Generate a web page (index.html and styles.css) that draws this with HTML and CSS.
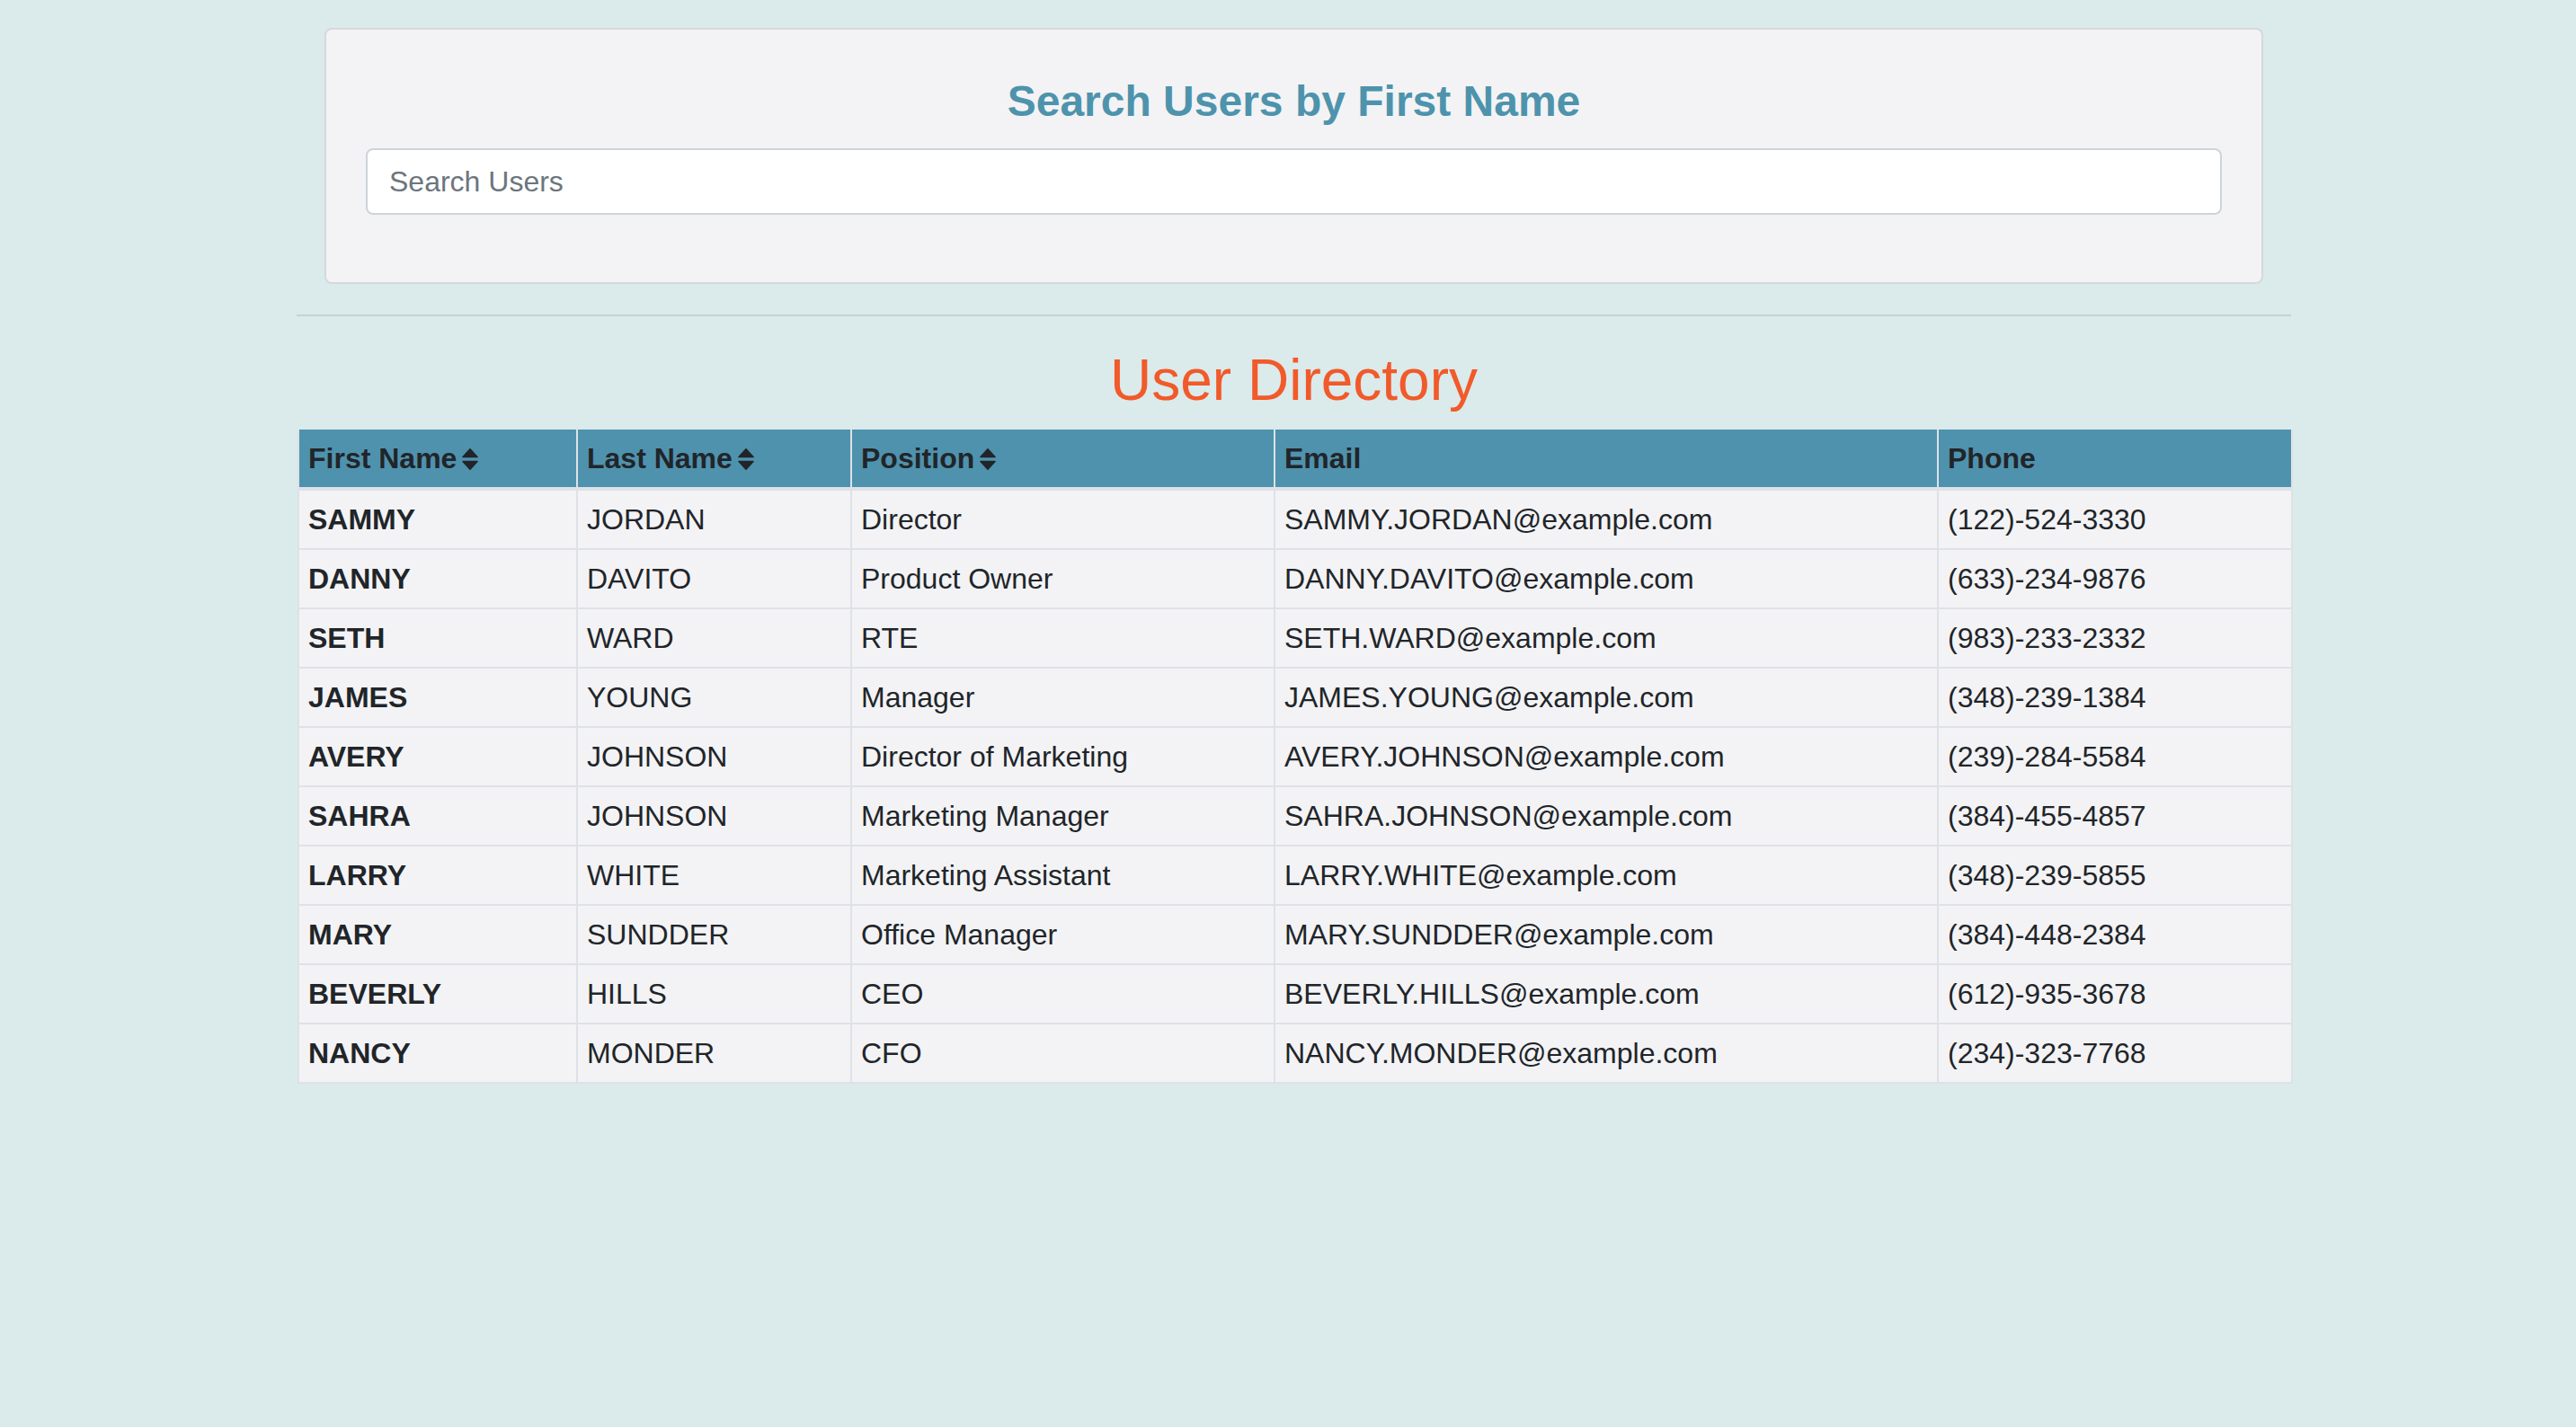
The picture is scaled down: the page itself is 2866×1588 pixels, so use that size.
FILE: index.html
```html
<!DOCTYPE html>
<html lang="en">
<head>
<meta charset="utf-8">
<title>User Directory</title>
<link rel="stylesheet" href="styles.css">
</head>
<body>
<div class="page">
  <section class="search-card">
    <h4 class="search-title">Search Users by First Name</h4>
    <input class="search-input" type="text" placeholder="Search Users">
  </section>
  <hr class="divider">
  <h2 class="dir-title">User Directory</h2>
  <table class="users">
    <colgroup>
      <col class="c1"><col class="c2"><col class="c3"><col class="c4"><col class="c5">
    </colgroup>
    <thead>
      <tr>
        <th>First Name<svg class="sort" viewBox="0 0 20 26" aria-hidden="true"><path d="M2 10.5 L10 1.8 L18 10.5 Z M2 15.5 L10 24.2 L18 15.5 Z"/></svg></th>
        <th>Last Name<svg class="sort" viewBox="0 0 20 26" aria-hidden="true"><path d="M2 10.5 L10 1.8 L18 10.5 Z M2 15.5 L10 24.2 L18 15.5 Z"/></svg></th>
        <th>Position<svg class="sort" viewBox="0 0 20 26" aria-hidden="true"><path d="M2 10.5 L10 1.8 L18 10.5 Z M2 15.5 L10 24.2 L18 15.5 Z"/></svg></th>
        <th>Email</th>
        <th>Phone</th>
      </tr>
    </thead>
    <tbody>
      <tr><th>SAMMY</th><td>JORDAN</td><td>Director</td><td>SAMMY.JORDAN@example.com</td><td>(122)-524-3330</td></tr>
      <tr><th>DANNY</th><td>DAVITO</td><td>Product Owner</td><td>DANNY.DAVITO@example.com</td><td>(633)-234-9876</td></tr>
      <tr><th>SETH</th><td>WARD</td><td>RTE</td><td>SETH.WARD@example.com</td><td>(983)-233-2332</td></tr>
      <tr><th>JAMES</th><td>YOUNG</td><td>Manager</td><td>JAMES.YOUNG@example.com</td><td>(348)-239-1384</td></tr>
      <tr><th>AVERY</th><td>JOHNSON</td><td>Director of Marketing</td><td>AVERY.JOHNSON@example.com</td><td>(239)-284-5584</td></tr>
      <tr><th>SAHRA</th><td>JOHNSON</td><td>Marketing Manager</td><td>SAHRA.JOHNSON@example.com</td><td>(384)-455-4857</td></tr>
      <tr><th>LARRY</th><td>WHITE</td><td>Marketing Assistant</td><td>LARRY.WHITE@example.com</td><td>(348)-239-5855</td></tr>
      <tr><th>MARY</th><td>SUNDDER</td><td>Office Manager</td><td>MARY.SUNDDER@example.com</td><td>(384)-448-2384</td></tr>
      <tr><th>BEVERLY</th><td>HILLS</td><td>CEO</td><td>BEVERLY.HILLS@example.com</td><td>(612)-935-3678</td></tr>
      <tr><th>NANCY</th><td>MONDER</td><td>CFO</td><td>NANCY.MONDER@example.com</td><td>(234)-323-7768</td></tr>
    </tbody>
  </table>
</div>
</body>
</html>
```
FILE: styles.css
```css
html, body {
  margin: 0;
  background: #dbeaea;
}
body {
  padding: 31px 0 0 13px;
  font-family: "Liberation Sans", Arial, sans-serif;
  color: #212529;
  min-height: 1588px;
  box-sizing: border-box;
}
.page {
  width: 2219px;
  margin: 0 auto;
}
.search-card {
  margin: 0 31px;
  background: #f3f3f5;
  border: 2px solid #d5d8db;
  border-radius: 8px;
  padding: 51px 44px 75px;
  display: flex;
  flex-direction: column;
}
.search-title {
  margin: 0;
  font-size: 48px;
  line-height: 58px;
  font-weight: 700;
  color: #4e93ac;
  text-align: center;
}
.search-input {
  margin-top: 23px;
  height: 74px;
  box-sizing: border-box;
  border: 2px solid #ced4da;
  border-radius: 8px;
  background: #fff;
  padding: 0 24px;
  font-family: inherit;
  font-size: 32px;
  color: #495057;
  outline: none;
}
.search-input::placeholder {
  color: #6c757d;
  opacity: 1;
}
.divider {
  margin: 34px 0 0;
  border: 0;
  border-top: 2px solid rgba(0, 0, 0, 0.1);
  height: 0;
}
.dir-title {
  margin: 33px 0 16px;
  font-size: 64px;
  line-height: 77px;
  font-weight: 500;
  color: #f15a2a;
  text-align: center;
}
.users {
  width: 2218px;
  margin-left: 1px;
  table-layout: fixed;
  border-collapse: collapse;
  font-size: 32px;
  line-height: 48px;
}
.users .c1 { width: 310px; }
.users .c2 { width: 305px; }
.users .c3 { width: 471px; }
.users .c4 { width: 738px; }
.users .c5 { width: 394px; }
.users th,
.users td {
  padding: 8px 10px;
  text-align: left;
  vertical-align: middle;
  border: 2px solid #dee2e6;
  white-space: nowrap;
}
.users thead th {
  background: #4f92ae;
  font-weight: 700;
  border-top: 0;
  border-bottom: 4px solid #dee2e6;
}
.users tbody th,
.users tbody td {
  background: #f3f3f5;
}
.users tbody th {
  font-weight: 700;
}
.users tbody td {
  font-weight: 400;
}
.sort {
  width: 20px;
  height: 26px;
  margin-left: 5px;
  vertical-align: -3px;
  fill: #212529;
  stroke: #212529;
  stroke-width: 1.6;
  stroke-linejoin: round;
}
```
